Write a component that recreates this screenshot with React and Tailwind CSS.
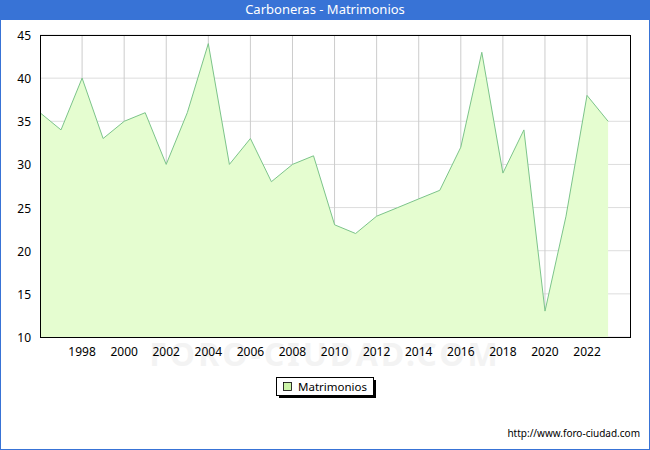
const data=[36,34,40,33,35,36,30,36,44,30,33,28,30,31,23,22,24,25,26,27,32,43,29,34,13,24,38,35];
const X=(i)=>40+i*21.04;
const Y=(v)=>337-(v-10)*302/35;
export default function App(){
  const pts=data.map((v,i)=>`${X(i).toFixed(1)},${Y(v).toFixed(1)}`).join(' ');
  const area=`40,337 ${pts} ${X(27).toFixed(1)},337`;
  const yt=[10,15,20,25,30,35,40,45];
  const xt=[];for(let y=1998;y<=2022;y+=2)xt.push(y);
  return(
    <div className="w-[650px] h-[450px] flex flex-col bg-[#3873d6] pb-px px-px font-['DejaVu_Sans',Verdana,sans-serif]">
      <div className="h-[20px] flex items-center justify-center text-white text-[13px]">Carboneras - Matrimonios</div>
      <div className="flex-1 bg-white relative overflow-hidden">
        <svg width="650" height="450" className="absolute -left-px -top-[20px]">
          <text x="325" y="366" textAnchor="middle" fontSize="32" fill="#f3f3f3" fontWeight="bold" letterSpacing="3">FORO-CIUDAD.COM</text>
          {yt.map(v=><line key={v} x1="40" x2="630" y1={Y(v)} y2={Y(v)} stroke="#dddddd"/>)}
          {xt.map(y=><line key={y} x1={X(y-1996)} x2={X(y-1996)} y1="35" y2="337" stroke="#cccccc"/>)}
          <polygon points={area} fill="#e5fdd0"/>
          <polyline points={pts} fill="none" stroke="#7cc48a" strokeWidth="1"/>
          <rect x="40.5" y="35.5" width="590" height="302" fill="none" stroke="#000"/>
          {yt.map(v=><text key={v} x="31" y={Y(v)+5} textAnchor="end" fontSize="12" fill="#000">{v}</text>)}
          {xt.map(y=><text key={y} x={X(y-1996)} y="356" textAnchor="middle" fontSize="12" fill="#000">{y}</text>)}
          <rect x="279" y="380" width="97" height="18" fill="#000"/>
          <rect x="276.5" y="377.5" width="97" height="18" fill="#fff" stroke="#000"/>
          <rect x="283.5" y="382.5" width="8" height="8" fill="#ccf5a8" stroke="#000" strokeWidth="0.8"/>
          <text x="298" y="391" fontSize="11.5" fill="#000">Matrimonios</text>
          <text x="640" y="437" textAnchor="end" fontSize="10" fill="#000">http://www.foro-ciudad.com</text>
        </svg>
      </div>
    </div>
  );
}
